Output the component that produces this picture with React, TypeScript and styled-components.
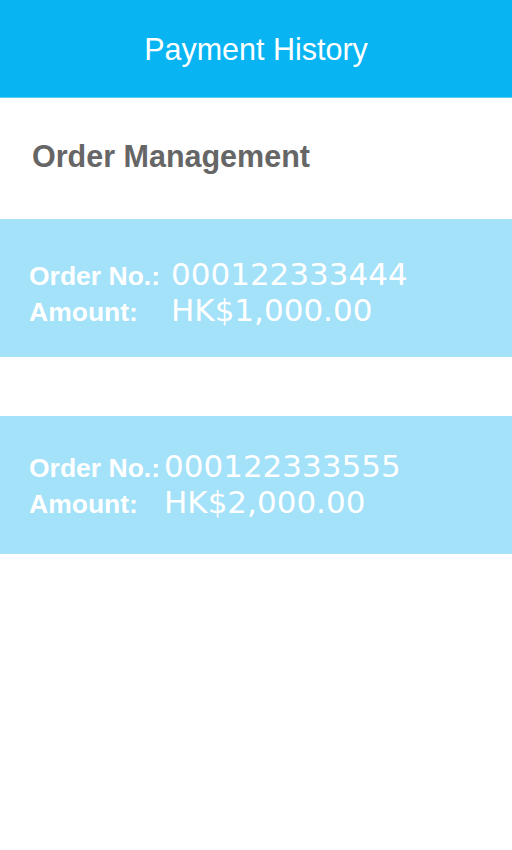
import React from 'react';
import styled, { createGlobalStyle } from 'styled-components';

const GlobalStyle = createGlobalStyle`
  html, body {
    margin: 0;
    padding: 0;
    background: #ffffff;
  }
  body {
    font-family: "Liberation Sans", Arial, sans-serif;
  }
`;

const Page = styled.div`
  width: 512px;
  min-height: 850px;
  background: #fff;
`;

const Header = styled.header`
  height: 98px;
  background: #08b5f2;
  display: flex;
  align-items: center;
  justify-content: center;
  border-bottom: 1px solid #5cccf3;
  box-sizing: border-box;
`;

const HeaderTitle = styled.h1`
  margin: 0;
  padding-top: 2px;
  font-size: 30.5px;
  font-weight: 400;
  color: #fff;
`;

const Heading = styled.h2`
  margin: 0;
  padding: 40px 0 0 32px;
  height: 81px;
  box-sizing: border-box;
  font-size: 30.5px;
  line-height: 36px;
  font-weight: 700;
  color: #666666;
`;

const List = styled.div`
  display: flex;
  flex-direction: column;
  gap: 59px;
  margin-top: 40px;
`;

const Card = styled.div<{ $top: number }>`
  height: 138px;
  box-sizing: border-box;
  background: #a3e2f9;
  padding: ${p => p.$top}px 0 0 29px;
`;

const Row = styled.div<{ $labelWidth: number }>`
  display: grid;
  grid-template-columns: ${p => p.$labelWidth}px auto;
  align-items: baseline;
  height: 36px;
  line-height: 36px;
  color: #fff;
`;

const Label = styled.span`
  font-size: 26.5px;
  font-weight: 700;
`;

const Value = styled.span`
  font-family: "DejaVu Sans", Verdana, sans-serif;
  font-size: 31px;
  font-weight: 400;
`;

const orders = [
  { no: '000122333444', amount: 'HK$1,000.00', top: 37, labelWidth: 142 },
  { no: '000122333555', amount: 'HK$2,000.00', top: 32, labelWidth: 135 },
];

export default function App() {
  return (
    <Page>
      <GlobalStyle />
      <Header>
        <HeaderTitle>Payment History</HeaderTitle>
      </Header>
      <Heading>Order Management</Heading>
      <List>
        {orders.map(o => (
          <Card key={o.no} $top={o.top}>
            <Row $labelWidth={o.labelWidth}>
              <Label>Order No.:</Label>
              <Value>{o.no}</Value>
            </Row>
            <Row $labelWidth={o.labelWidth}>
              <Label>Amount:</Label>
              <Value>{o.amount}</Value>
            </Row>
          </Card>
        ))}
      </List>
    </Page>
  );
}
